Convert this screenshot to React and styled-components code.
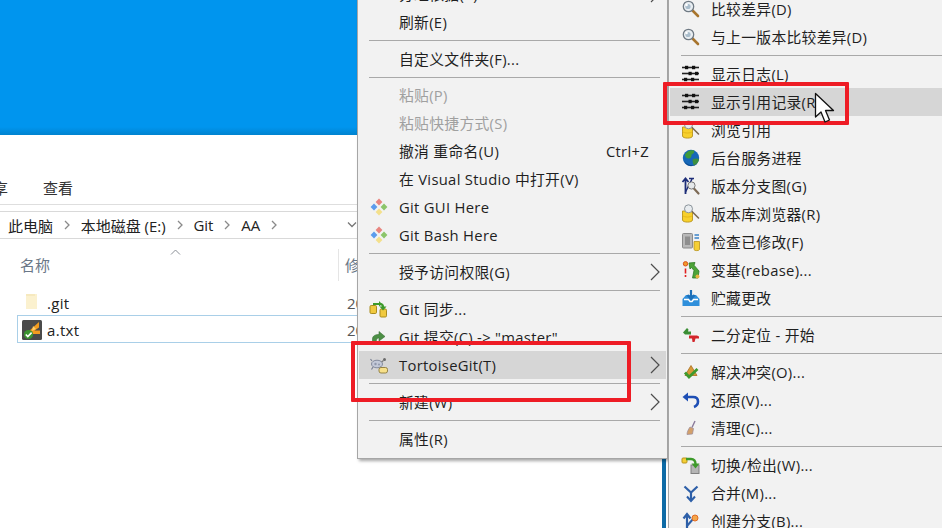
import React from "react";
import styled, { createGlobalStyle } from "styled-components";

const Global = createGlobalStyle`
  html, body { margin: 0; padding: 0; background: #fff; }
  body { font-family: "Open Sans", "Noto Sans CJK SC", sans-serif; }
`;

const Desktop = styled.div`
  position: relative;
  width: 942px;
  height: 528px;
  overflow: hidden;
  background: #fff;
  color: #1a1a1a;
  font-family: "Open Sans", "Noto Sans CJK SC", sans-serif;
`;

/* ---------- explorer window ---------- */
const Explorer = styled.section`
  position: absolute;
  left: 0;
  top: 0;
  width: 357px;
  height: 528px;
  display: flex;
  flex-direction: column;
  overflow: hidden;
`;
const TitleBand = styled.div`
  height: 135px;
  flex: none;
  background: linear-gradient(to bottom, #0095ee 0, #0095ee 127px, #0083cf 135px);
`;
const Ribbon = styled.div`
  height: 70px;
  flex: none;
  box-sizing: border-box;
  display: flex;
  align-items: flex-end;
  gap: 35px;
  padding: 0 0 2px 0;
  margin-left: -22px;
  border-bottom: 1px solid #dedede;
`;
const RibbonTab = styled.span`
  font-size: 15px;
  line-height: 28px;
  color: #333;
`;
const AddressBar = styled.div`
  height: 28px;
  margin-top: 6px;
  flex: none;
  box-sizing: border-box;
  display: flex;
  align-items: center;
  padding-left: 8px;
  border-top: 1px solid #d9d9d9;
  border-bottom: 1px solid #d9d9d9;
  font-size: 15px;
  color: #222;
  white-space: nowrap;
  position: relative;
`;
const Crumb = styled.span`
  display: inline-block;
`;
const CrumbArrow = styled.svg`
  width: 8px;
  height: 10px;
  margin: 0 9.7px 0 10px;
  flex: none;
`;
const AddressDrop = styled.svg`
  position: absolute;
  left: 347px;
  top: 9px;
  width: 10px;
  height: 8px;
`;
const ColumnHeader = styled.div`
  height: 50px;
  flex: none;
  display: flex;
  align-items: center;
  position: relative;
  font-size: 15px;
  color: #6a7787;
`;
const NameHead = styled.div`
  width: 339px;
  height: 32px;
  margin-top: 1px;
  box-sizing: border-box;
  padding-left: 20px;
  display: flex;
  align-items: center;
  border-right: 1px solid #e5e5e5;
  flex: none;
`;
const DateHead = styled.div`
  padding-left: 6px;
  white-space: nowrap;
`;
const SortMark = styled.svg`
  position: absolute;
  left: 170px;
  top: 10px;
  width: 11px;
  height: 6px;
`;
const FileRow = styled.div`
  height: ${(p) => (p.$selected ? 28 : 26)}px;
  box-sizing: border-box;
  margin-left: 17px;
  padding-top: 1px;
  display: flex;
  align-items: center;
  flex: none;
  font-size: 15px;
  color: #222;
  border: 1px solid ${(p) => (p.$selected ? "#a9cfe8" : "transparent")};
  border-right: none;
`;
const FileIconBox = styled.span`
  width: 20px;
  height: 20px;
  margin-left: 4px;
  flex: none;
  display: flex;
`;
const FileName = styled.span`
  width: 305px;
  flex: none;
  padding-left: 5px;
  box-sizing: border-box;
  letter-spacing: 0.3px;
`;
const FileDate = styled.span`
  color: #555;
  white-space: nowrap;
`;

/* ---------- strip of the window behind the menus ---------- */
const BackStrip = styled.div`
  position: absolute;
  left: 662px;
  top: 440px;
  width: 4px;
  height: 88px;
  background: #0e6ba6;
`;

/* ---------- context menus ---------- */
const Menu = styled.nav`
  position: absolute;
  left: ${(p) => p.$left}px;
  top: ${(p) => p.$top}px;
  width: ${(p) => p.$width}px;
  box-sizing: border-box;
  display: flex;
  flex-direction: column;
  padding: 0 1px ${(p) => p.$bottom}px 1px;
  background: #f2f2f2;
  border: 1px solid #a6a6a6;
  box-shadow: 2px 2px 3px rgba(0, 0, 0, 0.35);
  font-size: 14.8px;
  letter-spacing: 0.3px;
`;
const Row = styled.div`
  height: 28px;
  flex: none;
  display: flex;
  align-items: center;
  gap: 10px;
  padding-left: ${(p) => p.$indent}px;
  line-height: 28px;
  white-space: nowrap;
  color: ${(p) => (p.$disabled ? "#a0a0a0" : "#1f1f1f")};
  background: ${(p) => (p.$active ? "#d6d6d6" : "transparent")};
`;
const IconBox = styled.span`
  width: 20px;
  height: 20px;
  flex: none;
  display: flex;
`;
const Label = styled.span`
  flex: 1;
`;
const Shortcut = styled.span`
  margin-right: 17px;
`;
const Chevron = styled.svg`
  width: 10px;
  height: 18px;
  margin-right: 6px;
  flex: none;
`;
const Separator = styled.div`
  height: ${(p) => p.$h || 9}px;
  flex: none;
  display: flex;
  align-items: center;
  margin-left: ${(p) => p.$indent}px;
  margin-right: 6px;
  &::before {
    content: "";
    flex: 1;
    height: 1px;
    background: #a9a9a9;
  }
`;

/* ---------- annotations ---------- */
const RedBox = styled.div`
  position: absolute;
  left: ${(p) => p.$x}px;
  top: ${(p) => p.$y}px;
  width: ${(p) => p.$w}px;
  height: ${(p) => p.$h}px;
  box-sizing: border-box;
  border: 4px solid #ee1c25;
  border-radius: 1px;
`;
const Pointer = styled.svg`
  position: absolute;
  left: 814px;
  top: 92px;
  width: 21px;
  height: 33px;
`;

/* ---------- icons ---------- */
const S = (p) => <svg width="20" height="20" viewBox="0 0 20 20" {...p} />;

const browseIcon = (
  <S>
    <path d="M1.5 7V16C1.5 18.8 11.5 18.8 11.5 16V7Z" fill="#f7d02c" stroke="#b8931c" strokeWidth="0.9" />
    <path d="M1.5 11.5C3 13.5 10 13.5 11.5 11.5" fill="none" stroke="#e0ae17" strokeWidth="0.8" />
    <path d="M11 7.5L17.5 14" stroke="#7c6b52" strokeWidth="1.6" strokeLinecap="round" />
    <circle cx="7.5" cy="4.8" r="4" fill="#e8ecef" stroke="#8b949b" strokeWidth="1" />
  </S>
);

const icons = {
  magnifier: (
    <S>
      <path d="M11.5 11.5L17 17" stroke="#a8752e" strokeWidth="2.6" strokeLinecap="round" />
      <circle cx="7.5" cy="7.5" r="5.2" fill="#e9eef2" stroke="#6f7a84" strokeWidth="1.3" />
      <circle cx="7" cy="7.5" r="2.6" fill="#a9bdcc" />
      <circle cx="5.6" cy="6" r="1.2" fill="#fff" />
    </S>
  ),
  log: (
    <S>
      <g stroke="#222" strokeWidth="1.6">
        <path d="M1 3.5H18" />
        <path d="M1 9.5H18" />
        <path d="M1 15.5H18" />
      </g>
      <g fill="#111">
        <rect x="4" y="1.8" width="3.2" height="3.4" />
        <rect x="11" y="1.8" width="3.2" height="3.4" />
        <rect x="7.5" y="7.8" width="3.2" height="3.4" />
        <rect x="14" y="7.8" width="3.2" height="3.4" />
        <rect x="3" y="13.8" width="3.2" height="3.4" />
        <rect x="10" y="13.8" width="3.2" height="3.4" />
      </g>
    </S>
  ),
  browse: browseIcon,
  globe: (
    <S>
      <circle cx="10" cy="10" r="8.2" fill="#1668b8" />
      <path d="M4 6.5C6 3 10 1.5 13 2.5C14 4.5 12 6 10.5 6.5C11 9 9 11 7 10.5C5 10 4 8.5 4 6.5Z" fill="#3f9a3c" />
      <path d="M12 11C14.5 10 17 10.5 18 11.5C17.5 14.5 15.5 16.5 13 17.5C12 15.5 11 13 12 11Z" fill="#3c8f3f" />
      <path d="M3 13C6 17 12 19 16.5 15.5C14.5 18.5 6 20 3 13Z" fill="#0d4a8c" />
    </S>
  ),
  graph: (
    <S>
      <path d="M4.5 18V3M1.5 6L4.5 2.5L7.5 6" fill="none" stroke="#1d2d78" strokeWidth="1.8" />
      <path d="M4.5 16L11 3M8 2.5H13" fill="none" stroke="#1d2d78" strokeWidth="1.5" />
      <path d="M12.5 12L17.5 17.5" stroke="#7d6a55" strokeWidth="2.2" strokeLinecap="round" />
      <circle cx="10.5" cy="9.5" r="3.6" fill="#e5e8ea" stroke="#777" strokeWidth="1" />
    </S>
  ),
  check: (
    <S>
      <rect x="1.5" y="1.5" width="10" height="14.5" rx="1" fill="#b8b8b8" stroke="#8a8a8a" />
      <rect x="4" y="4.5" width="5" height="8.5" fill="#8e8e8e" />
      <path d="M13.5 3H18M13.5 6H18" stroke="#3a82c8" strokeWidth="1.3" />
      <path d="M13 9.5V17.5C13 19 18.5 19 18.5 17.5V9.5Z" fill="#f5cf35" stroke="#b8931c" strokeWidth="0.8" />
    </S>
  ),
  rebase: (
    <S>
      <circle cx="4.5" cy="3.8" r="2.2" fill="#f19a2a" stroke="#d9531e" />
      <path d="M4.5 8.5V13.5M4.5 15V17" stroke="#e02020" strokeWidth="1.6" />
      <path d="M8 3L14 2.5L13 5.2L18 11L17 18H11.5L13 10.5L10.5 7.5L9 9Z" fill="#4da338" stroke="#2c7a23" strokeWidth="0.8" />
      <circle cx="16.5" cy="16.5" r="2" fill="#e8b440" />
    </S>
  ),
  stash: (
    <S>
      <path d="M1.5 11L5 7H15L18.5 11V18H1.5Z" fill="#2f8fdb" />
      <path d="M3 11.5H7.5L9 13.5H11L12.5 11.5H17" fill="none" stroke="#fff" strokeWidth="1.4" />
      <path d="M10 2V9.5" stroke="#1d6fb8" strokeWidth="2.2" />
      <path d="M6.5 7L10 11L13.5 7" fill="none" stroke="#1d6fb8" strokeWidth="2" />
    </S>
  ),
  bisect: (
    <S>
      <path d="M2 7.5L6 3L7.5 4.5L7 6.5H10V9.5H4Z" fill="#3b8e35" />
      <path d="M8 10.5H16L18 11.5V13.5H14.5L13.5 17H11.5L11 13.5H8Z" fill="#d3262b" />
    </S>
  ),
  resolve: (
    <S>
      <path d="M10 3.5L16 13.5H4Z" fill="#d99a3a" stroke="#a86d1a" strokeWidth="0.8" />
      <path d="M4 10.5L8 15L16.5 7" fill="none" stroke="#3e9a2e" strokeWidth="2.8" />
    </S>
  ),
  revert: (
    <S>
      <path d="M5.5 7H12C15.5 7 17 9 17 11.5C17 14 15.5 16 13 17" fill="none" stroke="#1e4fb5" strokeWidth="2.6" />
      <path d="M7 2.5V11.5L1.5 7Z" fill="#1e4fb5" />
    </S>
  ),
  clean: (
    <S>
      <path d="M14 3L11 9.5" stroke="#8a7a9a" strokeWidth="1.4" />
      <path d="M9 9L12.5 10.5L11.5 16L6 16.5C6 14 7.5 11 9 9Z" fill="#d3a06a" stroke="#9a8a9a" strokeWidth="0.7" />
    </S>
  ),
  switch: (
    <S>
      <rect x="1" y="3" width="5" height="5" rx="1" fill="#f5cf35" stroke="#b8931c" />
      <rect x="10" y="10" width="8" height="8.5" fill="#b5b5b5" stroke="#808080" />
      <path d="M5 4H10C13 4 14.5 6 14.5 9" fill="none" stroke="#3d9a2a" strokeWidth="2.4" />
      <path d="M10.5 8.5H18.5L14.5 13.5Z" fill="#3d9a2a" />
    </S>
  ),
  merge: (
    <S>
      <path d="M3.5 3.5L10 9.5L16.5 3.5M10 9V17" fill="none" stroke="#2d5fa8" strokeWidth="2.2" />
      <path d="M6 13.5L10 18L14 13.5" fill="none" stroke="#2d5fa8" strokeWidth="2" />
    </S>
  ),
  branch: (
    <S>
      <path d="M6 19V4M2.5 7.5L6 3L9.5 7.5" fill="none" stroke="#2d5fa8" strokeWidth="2.2" />
      <path d="M6 15L12 8" stroke="#2d5fa8" strokeWidth="2" />
      <circle cx="14" cy="7" r="3" fill="#f3a64a" stroke="#e26b24" />
    </S>
  ),
  gitGui: (
    <S>
      <path d="M10 1.5L13.4 5L10 8.4L6.6 5Z" fill="#e8857f" />
      <path d="M5 6.6L8.4 10L5 13.4L1.6 10Z" fill="#5c9cec" />
      <path d="M15 6.6L18.4 10L15 13.4L11.6 10Z" fill="#8cc56a" />
      <path d="M10 11.6L13.4 15L10 18.4L6.6 15Z" fill="#f4e08c" />
    </S>
  ),
  sync: (
    <S>
      <rect x="1" y="6.5" width="6.5" height="8" rx="1.2" fill="#f0c93f" stroke="#a98c1f" />
      <rect x="11" y="10" width="6.5" height="8" rx="1.2" fill="#f0c93f" stroke="#a98c1f" />
      <path d="M4 5H11C13 5 14 6.2 14 8" fill="none" stroke="#3d9a2a" strokeWidth="2.2" />
      <path d="M10.5 7.5H17.5L14 11.5Z" fill="#3d9a2a" />
      <path d="M10 2L13 5L10 7.5Z" fill="#3d9a2a" />
    </S>
  ),
  commit: (
    <S>
      <path d="M3.5 17V12C3.5 9 6 7.5 10 7.5V4.5L16 9.5L10 14V11C8 11 7 12.5 7 17Z" fill="#4c8f45" stroke="#3a7135" strokeWidth="0.6" />
    </S>
  ),
  tortoise: (
    <S>
      <ellipse cx="8" cy="9" rx="5.5" ry="3.8" fill="#c3c9d8" stroke="#7b8296" strokeWidth="0.9" />
      <circle cx="6.5" cy="9" r="1.2" fill="#8f97ab" />
      <circle cx="10" cy="9.5" r="1" fill="#8f97ab" />
      <path d="M3 6L1.5 4M4 12L2.5 14.5M12 12L14 14" stroke="#7b8296" strokeWidth="1.2" />
      <circle cx="15.5" cy="4.5" r="1.5" fill="#6a6a6a" />
      <path d="M12.5 7L14.5 5.5" stroke="#777" strokeWidth="1.2" />
      <rect x="10" y="12.5" width="8.5" height="5.5" rx="2" fill="#f7e08a" stroke="#8d7a3b" strokeWidth="0.9" />
    </S>
  ),
};

const Folder = () => (
  <svg width="20" height="20" viewBox="0 0 20 20">
    <path d="M4 1H15V16H4Z" fill="#fbf1cf" />
    <path d="M4 1H13V3H4Z" fill="#f6e9bf" />
  </svg>
);
const TxtIcon = () => (
  <svg width="20" height="20" viewBox="0 0 20 20">
    <rect width="20" height="20" rx="1.5" fill="#4a4a4a" />
    <path d="M6 12L17 2V7.5L12.5 10.5H18V14H10Z" fill="#f39c1f" />
    <path d="M11 6L14 9L10 11Z" fill="#ffcf6b" />
    <circle cx="6.5" cy="14.5" r="4.6" fill="#3b9431" />
    <path d="M3.8 14.5L5.8 16.6L9.6 12.6" fill="none" stroke="#fff" strokeWidth="1.6" />
  </svg>
);
const Arrow = () => (
  <CrumbArrow viewBox="0 0 8 10">
    <path d="M2 1L6 5L2 9" fill="none" stroke="#8a8a8a" strokeWidth="1.3" />
  </CrumbArrow>
);
const Next = () => (
  <Chevron viewBox="0 0 10 18">
    <path d="M1 1L9 9L1 17" fill="none" stroke="#4d4d4d" strokeWidth="1.2" />
  </Chevron>
);

const SEP = (h) => ({ sep: true, h });
const mainMenu = [
  { t: "分组依据(P)", more: true },
  { t: "刷新(E)" },
  SEP(),
  { t: "自定义文件夹(F)..." },
  SEP(8),
  { t: "粘贴(P)", off: true },
  { t: "粘贴快捷方式(S)", off: true },
  { t: "撤消 重命名(U)", key: "Ctrl+Z" },
  { t: "在 Visual Studio 中打开(V)" },
  { t: "Git GUI Here", i: "gitGui" },
  { t: "Git Bash Here", i: "gitGui" },
  SEP(),
  { t: "授予访问权限(G)", more: true },
  SEP(),
  { t: "Git 同步...", i: "sync" },
  { t: 'Git 提交(C) -> "master"', i: "commit" },
  { t: "TortoiseGit(T)", i: "tortoise", more: true, on: true },
  SEP(),
  { t: "新建(W)", more: true },
  SEP(),
  { t: "属性(R)" },
];
const subMenu = [
  { t: "比较差异(D)", i: "magnifier" },
  { t: "与上一版本比较差异(D)", i: "magnifier" },
  SEP(),
  { t: "显示日志(L)", i: "log" },
  { t: "显示引用记录(R)", i: "log", on: true },
  { t: "浏览引用", i: "browse" },
  { t: "后台服务进程", i: "globe" },
  { t: "版本分支图(G)", i: "graph" },
  { t: "版本库浏览器(R)", i: "browse" },
  { t: "检查已修改(F)", i: "check" },
  { t: "变基(rebase)...", i: "rebase" },
  { t: "贮藏更改", i: "stash" },
  SEP(),
  { t: "二分定位 - 开始", i: "bisect" },
  SEP(),
  { t: "解决冲突(O)...", i: "resolve" },
  { t: "还原(V)...", i: "revert" },
  { t: "清理(C)...", i: "clean" },
  SEP(),
  { t: "切换/检出(W)...", i: "switch" },
  { t: "合并(M)...", i: "merge" },
  { t: "创建分支(B)...", i: "branch" },
];

const MenuItems = ({ items, indent }) =>
  items.map((m, n) =>
    m.sep ? (
      <Separator key={n} $h={m.h} $indent={indent} />
    ) : (
      <Row key={n} $indent={indent} $disabled={m.off} $active={m.on}>
        <IconBox>{m.i ? icons[m.i] : null}</IconBox>
        <Label>{m.t}</Label>
        {m.key ? <Shortcut>{m.key}</Shortcut> : null}
        {m.more ? <Next /> : null}
      </Row>
    )
  );

export default function App() {
  return (
    <Desktop>
      <Global />
      <Explorer>
        <TitleBand />
        <Ribbon>
          <RibbonTab>分享</RibbonTab>
          <RibbonTab>查看</RibbonTab>
        </Ribbon>
        <AddressBar>
          <Crumb>此电脑</Crumb>
          <Arrow />
          <Crumb>本地磁盘 (E:)</Crumb>
          <Arrow />
          <Crumb>Git</Crumb>
          <Arrow />
          <Crumb>AA</Crumb>
          <Arrow />
          <AddressDrop viewBox="0 0 10 8">
            <path d="M1 1.5L5 5.5L9 1.5" fill="none" stroke="#777" strokeWidth="1.3" />
          </AddressDrop>
        </AddressBar>
        <ColumnHeader>
          <SortMark viewBox="0 0 11 6">
            <path d="M1 5.5L5.5 1L10 5.5" fill="none" stroke="#8a8f96" strokeWidth="1" />
          </SortMark>
          <NameHead>名称</NameHead>
          <DateHead>修改日期</DateHead>
        </ColumnHeader>
        <FileRow>
          <FileIconBox><Folder /></FileIconBox>
          <FileName>.git</FileName>
          <FileDate>2020</FileDate>
        </FileRow>
        <FileRow $selected>
          <FileIconBox><TxtIcon /></FileIconBox>
          <FileName>a.txt</FileName>
          <FileDate>2020</FileDate>
        </FileRow>
      </Explorer>
      <BackStrip />
      <Menu $left={357} $top={-21} $width={311} $bottom={5}>
        <MenuItems items={mainMenu} indent={10} />
      </Menu>
      <Menu $left={668} $top={-6} $width={300} $bottom={4}>
        <MenuItems items={subMenu} indent={11} />
      </Menu>
      <RedBox $x={351} $y={341} $w={280} $h={61} />
      <RedBox $x={663} $y={82} $w={186} $h={43} />
      <Pointer viewBox="0 0 21 33">
        <path d="M1.5 1.5V25L7 20L11 30L15.5 28L11.5 18.5H19.5Z" fill="#fff" stroke="#111" strokeWidth="1.3" strokeLinejoin="round" />
      </Pointer>
    </Desktop>
  );
}
